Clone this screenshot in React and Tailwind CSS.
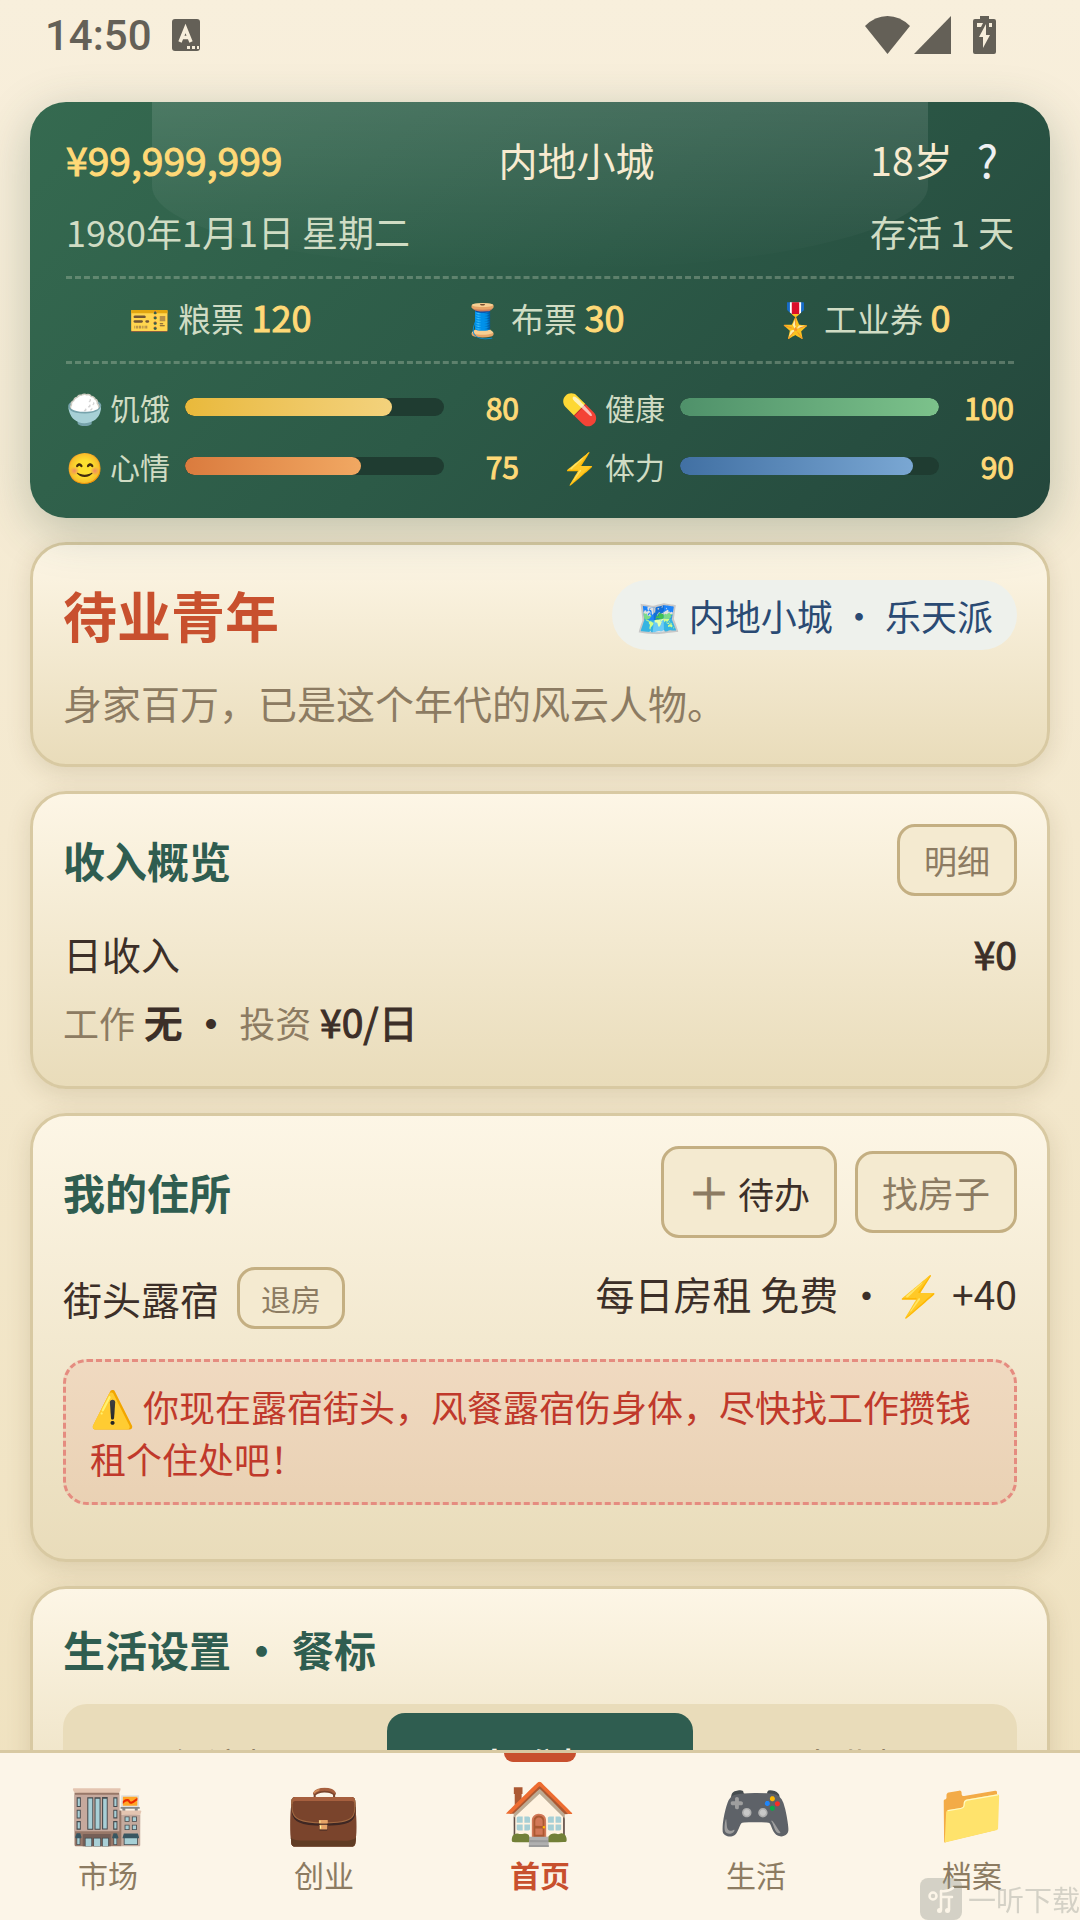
const STATS = [
  { icon: "🍚", label: "饥饿", value: 80, fill: 80, bar: "from-[#e9b93a] to-[#f3d27c]" },
  { icon: "💊", label: "健康", value: 100, fill: 100, bar: "from-[#4f916a] to-[#7cc28b]" },
  { icon: "😊", label: "心情", value: 75, fill: 68, bar: "from-[#da7b3e] to-[#f1a862]" },
  { icon: "⚡", label: "体力", value: 90, fill: 90, bar: "from-[#4170a3] to-[#7aa7d3]" },
];

const COUPONS = [
  { icon: "🎫", label: "粮票", value: 120 },
  { icon: "🧵", label: "布票", value: 30 },
  { icon: "🎖️", label: "工业券", value: 0 },
];

const MEALS = ["经济餐", "标准餐", "专业餐"];

const NAV = [
  { icon: "🏬", label: "市场" },
  { icon: "💼", label: "创业" },
  { icon: "🏠", label: "首页", active: true },
  { icon: "🎮", label: "生活" },
  { icon: "📁", label: "档案" },
];

const StatusBar = () => (
  <div className="flex items-center justify-between h-[70px] pl-[45px] pr-[84px] text-[#646057]">
    <div className="flex items-center gap-5">
      <span className="font-[Roboto,sans-serif] font-medium text-[42px]">14:50</span>
      <svg width="28" height="32" viewBox="0 0 28 32" aria-hidden="true">
        <rect width="28" height="32" rx="3" fill="currentColor" />
        <path d="M8 23 13.500 9.500 19 23M10 18.500H17" fill="none" stroke="#f7eedb" strokeWidth="3.500" />
        <path d="M15 27h3v3h-3zM20 27h3v3h-3zM25 27h2v3h-2z" fill="#f7eedb" />
      </svg>
    </div>
    <div className="flex items-center">
      <svg width="45" height="38" viewBox="0 0 45 38" fill="currentColor" aria-hidden="true">
        <path d="M0 10Q10 0 22.500 0T45 10L22.500 38Z" />
      </svg>
      <svg className="ml-1" width="38" height="38" viewBox="0 0 38 38" fill="currentColor" aria-hidden="true">
        <path d="M0 38 37 0V38Z" />
      </svg>
      <svg className="ml-[21px]" width="23" height="38" viewBox="0 0 23 38" aria-hidden="true">
        <path d="M7 0h9v3h5q2 0 2 2v31q0 2-2 2H2q-2 0-2-2V5q0-2 2-2h5z" fill="currentColor" />
        <path d="M4 7h6l-2 4H4zM16 7h3v4h-3zM13 8v11h4L10 32V21H6z" fill="#f7eedb" />
      </svg>
    </div>
  </div>
);

// Regular weight with a thin outline, keeps digits at their regular width
const Num = ({ className = "", children }) => (
  <strong className={`font-normal [-webkit-text-stroke:1px_currentColor] ${className}`}>{children}</strong>
);

const Header = () => (
  <header className="relative overflow-hidden rounded-[36px] px-9 pt-[26px] pb-7 bg-linear-135 from-[#356a50] via-[#2c5a47] to-[#24473c] text-[#d0dcc4]">
    <div className="absolute top-0 left-[12%] right-[12%] h-[168px] rounded-b-[50%] bg-linear-to-b from-white/12 to-white/0" />
    <div className="relative flex items-center justify-between leading-[62px] text-[39px] text-[#f7ebd0]">
      <Num className="text-[#ffd977]">¥99,999,999</Num>
      <span>内地小城</span>
      <span className="flex items-center gap-6 pr-4">
        18岁
        <button className="text-[45px] text-[#eef0f2]" aria-label="帮助">?</button>
      </span>
    </div>
    <div className="relative flex items-center justify-between mt-3 leading-[58px] text-[36px]">
      <span>1980年1月1日 星期二</span>
      <span>存活 1 天</span>
    </div>
    <div className="relative flex justify-around gap-6 mt-4 pt-[10px] pb-4 border-y-3 border-dashed border-[#d0dcc4]/30 leading-[54px] text-[33px]">
      {COUPONS.map((c) => (
        <span key={c.label}>
          {c.icon} {c.label} <Num className="text-[36px] text-[#ffd977]">{c.value}</Num>
        </span>
      ))}
    </div>
    <div className="relative grid grid-cols-2 gap-x-[42px] gap-y-[11px] mt-[19px] text-[30px] leading-[48px]">
      {STATS.map((s) => (
        <div key={s.label} className="flex items-center">
          <span className="w-[105px] mr-[14px] whitespace-nowrap">
            {s.icon} {s.label}
          </span>
          <div className="flex-1 h-[18px] rounded-full bg-[#1f3c31] overflow-hidden">
            <div className={`h-full rounded-full bg-linear-to-r ${s.bar}`} style={{ width: `${s.fill}%` }} />
          </div>
          <Num className="w-[75px] text-right text-[#ffd977]">{s.value}</Num>
        </div>
      ))}
    </div>
  </header>
);

const Card = ({ children }) => (
  <section className="rounded-[36px] border-3 border-[#d8c9a2] bg-linear-to-b from-[#fdf6e6] to-[#e9dcba] p-[30px] shadow-[0_6px_24px_rgba(90,70,30,0.15)]">
    {children}
  </section>
);

const OutlineButton = ({ className, children }) => (
  <button className={`border-3 border-[#c4af82] bg-[#f4ead0] text-[#8c7b62] whitespace-nowrap ${className}`}>
    {children}
  </button>
);

const CardTitle = ({ children }) => (
  <h2 className="font-bold text-[42px] leading-[60px] text-[#2f5d50]">{children}</h2>
);

const NavBar = () => (
  <nav className="fixed bottom-0 inset-x-0 z-20 flex h-[170px] border-t-3 border-[#d8c9a2] bg-[#fcf5e8]">
    {NAV.map((n) => (
      <button key={n.label} className="relative flex-1 flex flex-col items-center pt-4">
        {n.active && <span className="absolute top-0 w-[72px] h-[9px] rounded-b-[9px] bg-[#c8502e]" />}
        <span className="text-[60px] leading-[78px]">{n.icon}</span>
        <span className={`mt-[6px] text-[30px] leading-[42px] ${n.active ? "font-bold text-[#c8502e]" : "text-[#8c7b62]"}`}>
          {n.label}
        </span>
      </button>
    ))}
  </nav>
);

const Watermark = () => (
  <div className="fixed bottom-0 right-0 z-30 flex items-center gap-[6px] text-[28px] leading-[42px] text-[#8a8f88]/35">
    <svg width="42" height="42" viewBox="0 0 42 42" aria-hidden="true">
      <rect width="42" height="42" rx="8" fill="currentColor" />
      <g fill="none" stroke="#fcf5e8" strokeWidth="2.500" strokeLinecap="round">
        <circle cx="13" cy="18" r="3.500" />
        <path d="M21 13v19M21 13q7 1 12-3M22 19h10M29 19v13" />
      </g>
      <circle cx="19.500" cy="32.500" r="2.500" fill="#fcf5e8" />
      <circle cx="27.500" cy="32.500" r="2.500" fill="#fcf5e8" />
    </svg>
    一听下载
  </div>
);

export default function App() {
  return (
    <div className="h-screen overflow-hidden bg-linear-to-b from-[#f8efdc] to-[#efe1be] font-['Noto_Sans_CJK_SC','Noto_Color_Emoji',sans-serif] text-[#3c2f28]">
      <StatusBar />
      <main className="flex flex-col gap-6 px-[30px] pt-8 text-[39px] leading-[62px]">
        <div className="relative z-10 rounded-[36px] shadow-[0_12px_48px_rgba(47,80,60,0.28)]">
          <Header />
        </div>

        <Card>
          <div className="flex items-center justify-between">
            <h1 className="font-bold text-[54px] leading-[80px] text-[#c8502e]">待业青年</h1>
            <span className="rounded-full bg-[#eef1ec] px-6 py-[6px] text-[36px] leading-[58px] text-[#2a4a73]">
              🗺️ 内地小城 · 乐天派
            </span>
          </div>
          <p className="mt-4 mb-px text-[#8c7b62]">身家百万，已是这个年代的风云人物。</p>
        </Card>

        <Card>
          <div className="flex items-center justify-between mb-[26px]">
            <CardTitle>收入概览</CardTitle>
            <OutlineButton className="rounded-[18px] px-6 py-[8px] text-[33px] leading-[50px]">明细</OutlineButton>
          </div>
          <div className="flex items-center justify-between">
            <span>日收入</span>
            <Num>¥0</Num>
          </div>
          <p className="mt-[6px] mb-[3px]">
            <span className="text-[36px] text-[#8c7b62]">工作</span> <strong>无</strong> <strong>·</strong>{" "}
            <span className="text-[36px] text-[#8c7b62]">投资</span> <Num>¥0/日</Num>
          </p>
        </Card>

        <Card>
          <div className="flex items-center justify-between mb-[29px]">
            <CardTitle>我的住所</CardTitle>
            <div className="flex items-center gap-[18px]">
              <OutlineButton className="rounded-[18px] px-6 py-3 text-[42px] leading-[60px]">
                <span className="[-webkit-text-stroke:1px_currentColor]">＋</span>
                <span className="ml-2 text-[36px] text-[#3c2f28]">待办</span>
              </OutlineButton>
              <OutlineButton className="rounded-[18px] px-6 py-3 text-[36px] leading-[52px]">找房子</OutlineButton>
            </div>
          </div>
          <div className="flex items-start justify-between">
            <div className="flex items-center gap-[18px] leading-[58px]">
              街头露宿
              <OutlineButton className="rounded-[18px] px-[21px] py-[4px] text-[30px] leading-[48px]">退房</OutlineButton>
            </div>
            <span className="leading-[52px]">每日房租 免费 · ⚡ +40</span>
          </div>
          <p className="mt-[30px] mb-6 rounded-[24px] border-3 border-dashed border-[#e58c80] bg-[#e05040]/9 px-6 py-[18px] text-[36px] leading-[52px] text-[#c0392b]">
            ⚠️ 你现在露宿街头，风餐露宿伤身体，尽快找工作攒钱租个住处吧！
          </p>
        </Card>

        <Card>
          <CardTitle>生活设置 · 餐标</CardTitle>
          <div className="flex gap-[9px] mt-[25px] rounded-[24px] bg-[#e9dcba] p-[9px]">
            {MEALS.map((meal, i) => (
              <button
                key={meal}
                className={`flex-1 rounded-[18px] py-[22px] text-[36px] leading-[58px] ${
                  i === 1 ? "bg-[#2f5d50] font-bold text-[#fdf6e8]" : "text-[#8c7b62]"
                }`}
              >
                {meal}
              </button>
            ))}
          </div>
        </Card>
      </main>
      <NavBar />
      <Watermark />
    </div>
  );
}
